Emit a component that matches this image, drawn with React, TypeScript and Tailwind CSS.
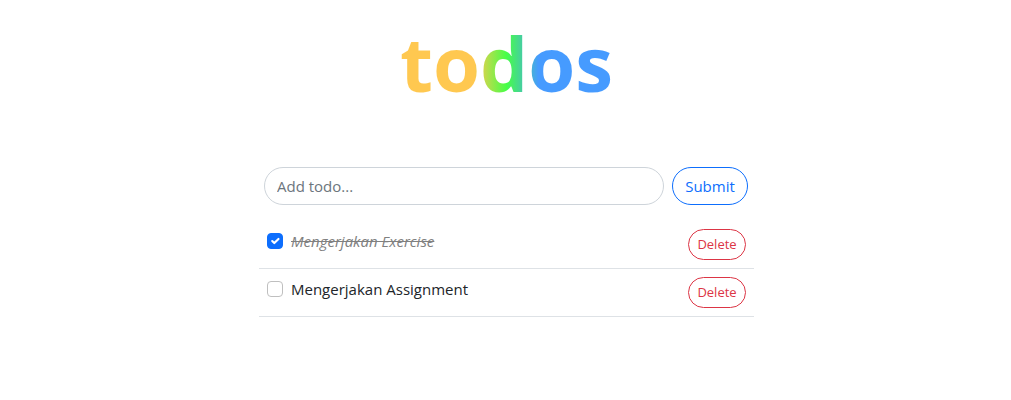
import { useState } from "react";

type Todo = { id: number; title: string; done: boolean };

const initialTodos: Todo[] = [
  { id: 1, title: "Mengerjakan Exercise", done: true },
  { id: 2, title: "Mengerjakan Assignment", done: false },
];

function TodoRow({ todo, onToggle, onDelete }: { todo: Todo; onToggle: () => void; onDelete: () => void }) {
  const id = `todo-${todo.id}`;
  return (
    <li className="flex items-start justify-between border-b border-[#dee2e6] p-2">
      <div className="flex items-start gap-2">
        <span className="relative mt-1 block size-4 shrink-0">
          <input
            id={id}
            type="checkbox"
            checked={todo.done}
            onChange={onToggle}
            className="block size-4 appearance-none rounded border border-[#bfbfbf] bg-white checked:border-[#0d6efd] checked:bg-[#0d6efd]"
          />
          {todo.done && (
            <svg viewBox="0 0 20 20" aria-hidden="true" className="pointer-events-none absolute inset-px size-3.5">
              <path
                d="m6 10 3 3 6-6"
                fill="none"
                stroke="#fff"
                strokeLinecap="round"
                strokeLinejoin="round"
                strokeWidth="3"
              />
            </svg>
          )}
        </span>
        <label
          htmlFor={id}
          className={
            todo.done
              ? "text-[15px] leading-6 text-[#808080] italic line-through"
              : "text-[15px] leading-6 text-[#212529]"
          }
        >
          {todo.title}
        </label>
      </div>
      <button
        type="button"
        onClick={onDelete}
        className="min-w-[58px] rounded-full border border-[#dc3545] px-2 py-1 text-[13px] leading-[21px] text-[#dc3545]"
      >
        Delete
      </button>
    </li>
  );
}

export default function App() {
  const [todos, setTodos] = useState(initialTodos);
  const [title, setTitle] = useState("");

  return (
    <main className="flex min-h-screen flex-col items-center bg-white pl-0.5 font-['Open_Sans','Noto_Sans',sans-serif]">
      <h1 className="mt-2 bg-linear-to-r/srgb from-[#ffc850] from-35% via-[#46ff46] via-50% to-[#469bff] to-65% bg-clip-text text-[76px] leading-[110px] font-bold text-transparent">
        todos
      </h1>
      <div className="mt-[49px] flex w-full max-w-[495px] flex-col gap-4">
        <form
          className="flex gap-2 pr-1.5 pl-[5px]"
          onSubmit={(event) => {
            event.preventDefault();
            if (!title.trim()) return;
            setTodos([...todos, { id: Date.now(), title: title.trim(), done: false }]);
            setTitle("");
          }}
        >
          <input
            type="text"
            aria-label="Add todo"
            placeholder="Add todo..."
            value={title}
            onChange={(event) => setTitle(event.target.value)}
            className="min-w-0 flex-1 rounded-full border border-[#ced4da] px-3 py-1.5 text-[15px] leading-6 text-[#212529] placeholder:text-[#6c757d]"
          />
          <button
            type="submit"
            className="min-w-[76px] rounded-full border border-[#0d6efd] px-3 py-1.5 text-[15px] leading-6 text-[#0d6efd]"
          >
            Submit
          </button>
        </form>
        <ul>
          {todos.map((todo) => (
            <TodoRow
              key={todo.id}
              todo={todo}
              onToggle={() => setTodos(todos.map((t) => (t.id === todo.id ? { ...t, done: !t.done } : t)))}
              onDelete={() => setTodos(todos.filter((t) => t.id !== todo.id))}
            />
          ))}
        </ul>
      </div>
    </main>
  );
}
